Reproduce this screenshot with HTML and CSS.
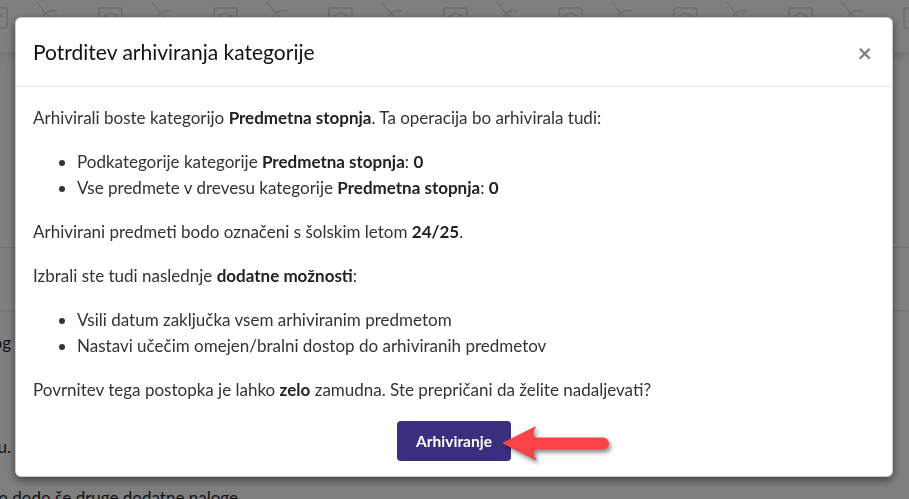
FILE: index.html
```html
<!DOCTYPE html>
<html lang="sl">
<head>
<meta charset="utf-8">
<title>Potrditev arhiviranja kategorije</title>
<link rel="stylesheet" href="styles.css">
</head>
<body>
<div class="page">
  <header class="topbar">
    <svg class="pattern" width="100%" height="52" aria-hidden="true">
      <defs>
        <pattern id="pat" x="-17" y="0" width="115" height="52" patternUnits="userSpaceOnUse">
          <rect x="1" y="8" width="23" height="20" rx="2" fill="none" stroke="#d9d9d9" stroke-width="1.5"/>
          <path d="M6 16 L12.5 13 L19 16 L12.5 19 Z M9 17.5 V21 Q12.5 23 16 21 V17.5" fill="none" stroke="#d9d9d9" stroke-width="1.3"/>
          <path d="M54 2 C58 8 63 14 71 21" fill="none" stroke="#d9d9d9" stroke-width="1.3"/>
          <path d="M58 21 C60 13 66 9 74 11" fill="none" stroke="#d9d9d9" stroke-width="1.3"/>
        </pattern>
      </defs>
      <rect width="100%" height="52" fill="url(#pat)"/>
    </svg>
  </header>
  <main class="content">
    <div class="row row-top"></div>
    <div class="row row-mid"></div>
    <div class="row row-text"><div class="clip clip-a"><span>Uporabniki bodo o tem obveščeni v katalog</span></div></div>
    <div class="row row-text2"><div class="clip clip-b"><span>Učenci lahko še vedno dostopajo do vsebin na predmetu.</span></div></div>
    <div class="row row-bottom"><div class="clip clip-c"><span>Učitelj lahko dodo še druge dodatne naloge</span></div></div>
  </main>
</div>

<div class="backdrop"></div>

<div class="modal" role="dialog" aria-labelledby="mtitle">
  <div class="modal-header">
    <h4 class="modal-title" id="mtitle">Potrditev arhiviranja kategorije</h4>
    <button class="close" type="button" aria-label="Zapri">×</button>
  </div>
  <div class="modal-body">
    <p>Arhivirali boste kategorijo <b>Predmetna stopnja</b>. Ta operacija bo arhivirala tudi:</p>
    <ul>
      <li>Podkategorije kategorije <b>Predmetna stopnja</b>: <b>0</b></li>
      <li>Vse predmete v drevesu kategorije <b>Predmetna stopnja</b>: <b>0</b></li>
    </ul>
    <p>Arhivirani predmeti bodo označeni s šolskim letom <b>24/25</b>.</p>
    <p>Izbrali ste tudi naslednje <b>dodatne možnosti</b>:</p>
    <ul>
      <li>Vsili datum zaključka vsem arhiviranim predmetom</li>
      <li>Nastavi učečim omejen/bralni dostop do arhiviranih predmetov</li>
    </ul>
    <p>Povrnitev tega postopka je lahko <b>zelo</b> zamudna. Ste prepričani da želite nadaljevati?</p>
    <div class="actions">
      <button class="btn-primary" type="button">Arhiviranje</button>
    </div>
  </div>
</div>

<svg class="arrow" width="120" height="50" viewBox="0 0 120 50" aria-hidden="true">
  <path d="M3 25 L37 8 Q32 18 37 19.5 L104 19.5 A6 6 0 0 1 104 31.5 L37 31.5 Q32 33 38 43 Z" fill="#f94346"/>
</svg>
</body>
</html>
```

FILE: styles.css
```css
* { box-sizing: border-box; }
html, body { margin: 0; padding: 0; }
body {
  width: 909px;
  height: 499px;
  overflow: hidden;
  background: #fff;
  font-family: Lato, "Source Sans Pro", "Liberation Sans", sans-serif;
  font-size: 17px;
  color: #333;
}
.page { display: flex; flex-direction: column; height: 499px; overflow: hidden; }
.topbar {
  height: 52px;
  flex: none;
  background: #fff;
  box-shadow: 0 3px 12px rgba(0,0,0,.14);
  position: relative;
  z-index: 1;
}
.pattern { display: block; }
.content { flex: 1; display: flex; flex-direction: column; min-height: 0; }
.row { flex: none; border-bottom: 1px solid #e0e0e0; }
.row-top { height: 196px; }
.row-mid { height: 63px; }
.row-text { height: 70px; border-bottom: none; line-height: 24px; padding-top: 20px; }
.row-text2 { height: 100px; border-bottom: none; line-height: 24px; padding-top: 54px; }
.row-bottom { height: 18px; border-bottom: none; line-height: 24px; padding-top: 5px; overflow: hidden; }
.clip { display: flex; justify-content: flex-end; white-space: nowrap; color: #2b2b2b; }
.clip span { flex: none; }
.clip-a { width: 11px; }
.clip-b { width: 11px; }
.clip-c { width: 238px; }

.backdrop {
  position: fixed;
  inset: 0;
  background: rgba(0,0,0,.5);
  z-index: 10;
}
.modal {
  position: fixed;
  left: 15px;
  top: 17px;
  width: 878px;
  background: #fff;
  border: 1px solid rgba(0,0,0,.2);
  border-radius: 6px;
  box-shadow: 0 3px 9px rgba(0,0,0,.5);
  z-index: 20;
}
.modal-header {
  height: 69px;
  display: flex;
  align-items: center;
  justify-content: space-between;
  padding: 0 20px 0 17px;
  border-bottom: 1px solid #e5e5e5;
}
.modal-title {
  margin: 0;
  font-size: 21px;
  font-weight: 400;
  color: #111;
  line-height: 30px;
}
.close {
  border: 0;
  background: none;
  padding: 0;
  font-family: Lato, sans-serif;
  font-size: 25px;
  font-weight: 700;
  line-height: 1;
  color: #000;
  opacity: .5;
}
.modal-body { padding: 18px 17px 15px; }
.modal-body p { margin: 0 0 18px; line-height: 26px; }
.modal-body ul { margin: 0 0 18px; padding-left: 44px; line-height: 26px; }
.modal-body b { font-weight: 700; color: #222; }
.actions { display: flex; justify-content: center; }
.btn-primary {
  height: 40px;
  padding: 0 19px;
  border: 0;
  border-radius: 4px;
  background: #3b2e7e;
  color: #fff;
  font-family: Lato, sans-serif;
  font-size: 15.5px;
  font-weight: 700;
}
.arrow {
  position: fixed;
  left: 499px;
  top: 418px;
  z-index: 30;
  filter: drop-shadow(2px 3px 2px rgba(0,0,0,.45));
}
```
